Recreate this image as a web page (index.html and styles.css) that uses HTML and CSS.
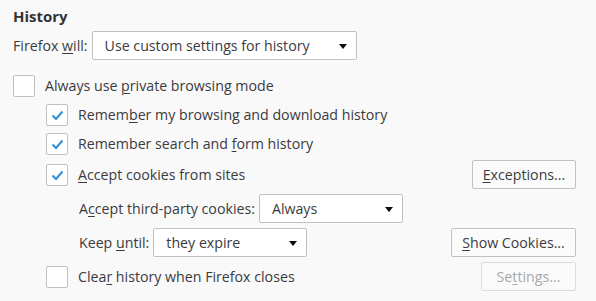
FILE: index.html
```html
<!DOCTYPE html>
<html lang="en">
<head>
    <meta charset="UTF-8">
    <title>History</title>
    <link rel="stylesheet" href="styles.css">
</head>
<body>
    <div class="pane">
        <h2>History</h2>
        <div class="row will-row">
            <label>Firefox <u>w</u>ill:</label>
            <div class="select select-wide">Use custom settings for history<span class="arrow"></span></div>
        </div>

        <div class="row private-row">
            <span class="box"></span>
            <span class="text">Always use <u>p</u>rivate browsing mode</span>
        </div>

        <div class="nested">
            <div class="row">
                <span class="box"><svg viewBox="0 0 20 20"><path d="M5.5 10.5 L9 14 L15.5 6.5"/></svg></span>
                <span class="text">Remem<u>b</u>er my browsing and download history</span>
            </div>
            <div class="row">
                <span class="box"><svg viewBox="0 0 20 20"><path d="M5.5 10.5 L9 14 L15.5 6.5"/></svg></span>
                <span class="text">Remember search and <u>f</u>orm history</span>
            </div>
            <div class="row cookie-row">
                <span class="box"><svg viewBox="0 0 20 20"><path d="M5.5 10.5 L9 14 L15.5 6.5"/></svg></span>
                <span class="text"><u>A</u>ccept cookies from sites</span>
                <button class="btn btn-exceptions"><u>E</u>xceptions...</button>
            </div>
            <div class="row sub-row">
                <label>A<u>c</u>cept third-party cookies:</label>
                <div class="select select-third">Always<span class="arrow"></span></div>
            </div>
            <div class="row sub-row">
                <label>Keep <u>u</u>ntil:</label>
                <div class="select select-keep">they expire<span class="arrow"></span></div>
                <button class="btn btn-cookies"><u>S</u>how Cookies...</button>
            </div>
            <div class="row clear-row">
                <span class="box"></span>
                <span class="text">Clea<u>r</u> history when Firefox closes</span>
                <button class="btn btn-settings" disabled>Se<u>t</u>tings...</button>
            </div>
        </div>
    </div>
</body>
</html>
```

FILE: styles.css
```css
body {
    margin: 0;
    background-color: #f9f9fa;
    font-family: "Open Sans", "Noto Sans", sans-serif;
    font-size: 14.2px;
    color: #3b3b3d;
}
.pane {
    padding: 5px 20px 0 13px;
}
h2 {
    margin: 0;
    height: 22px;
    line-height: 22px;
    font-size: 15px;
    font-weight: 700;
    color: #333;
}
u {
    text-decoration-thickness: 1px;
    text-underline-offset: 2px;
}
.row {
    display: flex;
    align-items: center;
    height: 29px;
}
.will-row {
    margin-top: 4px;
}
.will-row label {
    margin-right: 4px;
}
.private-row {
    margin-top: 11px;
}
.nested {
    padding-left: 33px;
}
.cookie-row {
    margin-top: 2px;
}
.sub-row {
    margin-top: 5px;
    padding-left: 33px;
}
.sub-row label {
    margin-right: 4px;
}
.clear-row {
    margin-top: 5px;
}
.box {
    width: 20px;
    height: 20px;
    border: 1px solid #c1c1c3;
    border-radius: 2px;
    background: #fff;
    margin-right: 10px;
    flex-shrink: 0;
}
.box svg {
    display: block;
    width: 20px;
    height: 20px;
}
.box path {
    fill: none;
    stroke: #2f8fd5;
    stroke-width: 2;
}
.select {
    position: relative;
    box-sizing: border-box;
    height: 29px;
    line-height: 27px;
    padding-left: 12px;
    border: 1px solid #c1c1c3;
    border-radius: 2px;
    background: #fff;
}
.select-wide {
    width: 265px;
}
.select-third {
    width: 144px;
}
.select-keep {
    width: 154px;
}
.arrow {
    position: absolute;
    right: 9px;
    top: 12px;
    width: 0;
    height: 0;
    border-left: 4px solid transparent;
    border-right: 4px solid transparent;
    border-top: 5px solid #0c0c0d;
}
.btn {
    margin-left: auto;
    box-sizing: border-box;
    height: 29px;
    padding: 0;
    border: 1px solid #c1c1c3;
    border-radius: 2px;
    background: #fbfbfb;
    font-family: inherit;
    font-size: 14.2px;
    color: #3b3b3d;
}
.btn-exceptions {
    width: 104px;
}
.btn-cookies {
    width: 125px;
}
.btn-settings {
    width: 95px;
    color: #a8a8aa;
    border-color: #dcdcde;
    background: #fafafb;
}
```
